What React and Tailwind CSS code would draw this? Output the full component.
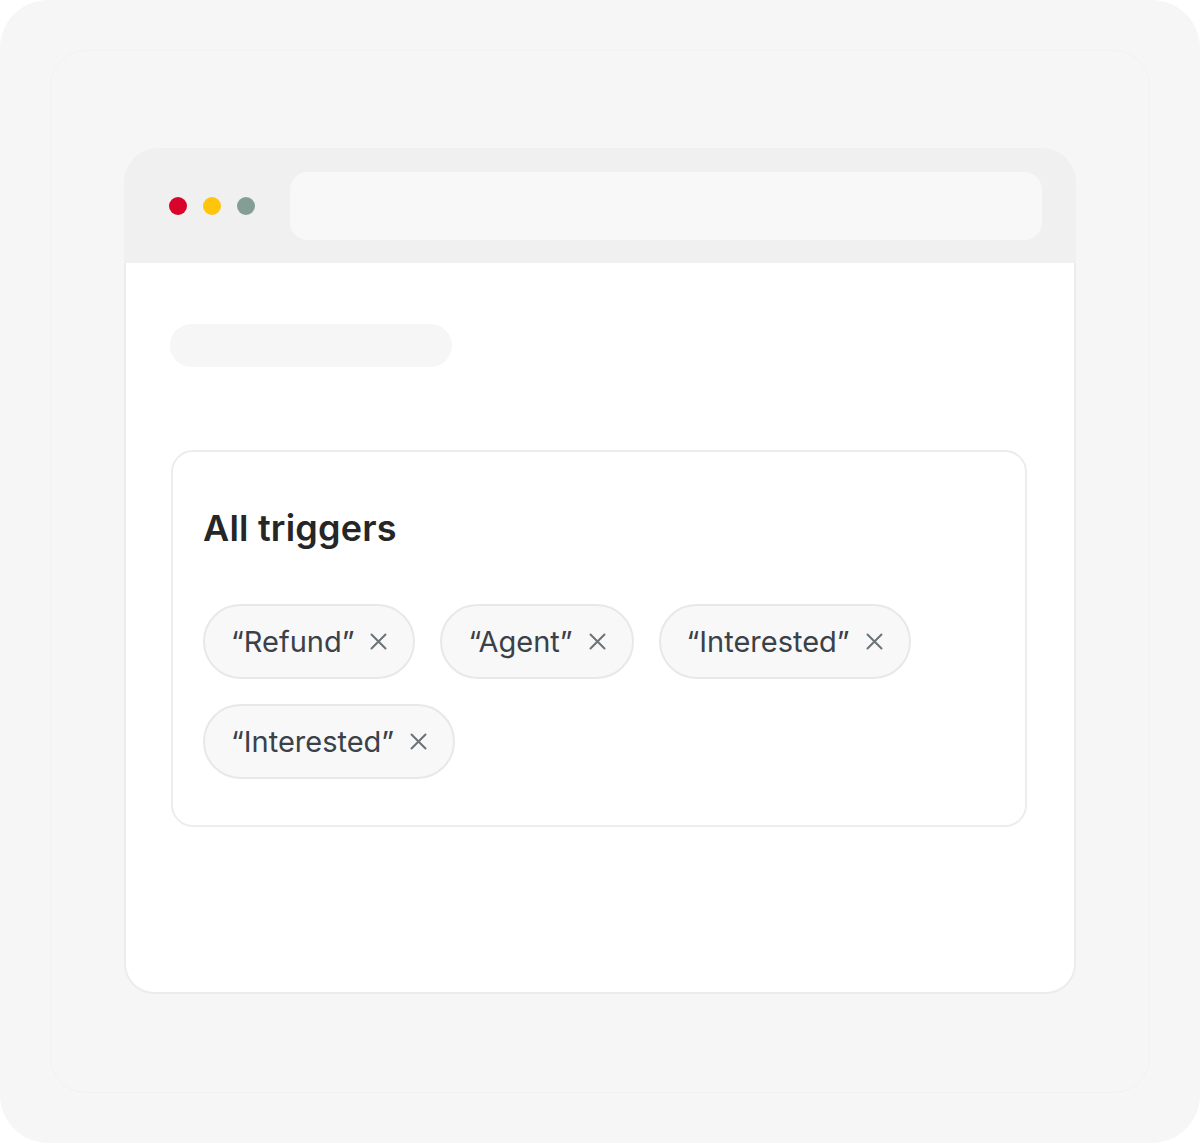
const chips = ["“Refund”", "“Agent”", "“Interested”", "“Interested”"];

function CloseIcon() {
  return (
    <svg width="17" height="17" viewBox="0 0 17 17" fill="none" className="shrink-0">
      <path d="M1.5 1.5L15.5 15.5M15.5 1.5L1.5 15.5" stroke="#6b7378" strokeWidth="2" strokeLinecap="round" />
    </svg>
  );
}

function Chip({ label }) {
  return (
    <div className="flex items-center gap-[16px] h-[75px] pl-[26px] pr-[26px] rounded-full border-2 border-[#e8e8e8] bg-[#f8f8f8]">
      <span className="text-[29px] text-[#3a4149] leading-none">{label}</span>
      <CloseIcon />
    </div>
  );
}

export default function App() {
  return (
    <div className="w-[1200px] h-[1143px] bg-white" style={{ fontFamily: "Inter, 'Noto Sans', sans-serif" }}>
      <div className="w-full h-full rounded-[48px] bg-[#f6f6f6] p-[50px]">
        <div className="w-full h-full rounded-[36px] border border-[#f2f2f2] pt-[97px] pl-[73px]">
          <div className="w-[952px] h-[846px] flex flex-col">
            <div className="flex items-center h-[115px] bg-[#f0f0f0] rounded-t-[34px] pl-[45px] pr-[34px]">
              <div className="flex gap-[16px]">
                <div className="size-[18px] rounded-full bg-[#d9042b]" />
                <div className="size-[18px] rounded-full bg-[#ffc40c]" />
                <div className="size-[18px] rounded-full bg-[#849e96]" />
              </div>
              <div className="ml-[35px] flex-1 h-[68px] rounded-[18px] bg-[#f8f8f8]" />
            </div>
            <div className="flex-1 bg-white border-2 border-t-0 border-[#ececec] rounded-b-[30px] pt-[61px] pl-[44px] pr-[47px]">
              <div className="w-[282px] h-[43px] rounded-full bg-[#f6f6f6]" />
              <div className="mt-[83px] ml-[1px] rounded-[22px] border-2 border-[#ececec] pt-[58px] pb-[46px] pl-[30px]">
                <h1 className="text-[36px] font-semibold text-[#262626] leading-none tracking-[0.2px]">All triggers</h1>
                <div className="mt-[58px] flex flex-wrap gap-[25px] w-[760px]">
                  {chips.map((l, i) => (
                    <Chip key={i} label={l} />
                  ))}
                </div>
              </div>
            </div>
          </div>
        </div>
      </div>
    </div>
  );
}
